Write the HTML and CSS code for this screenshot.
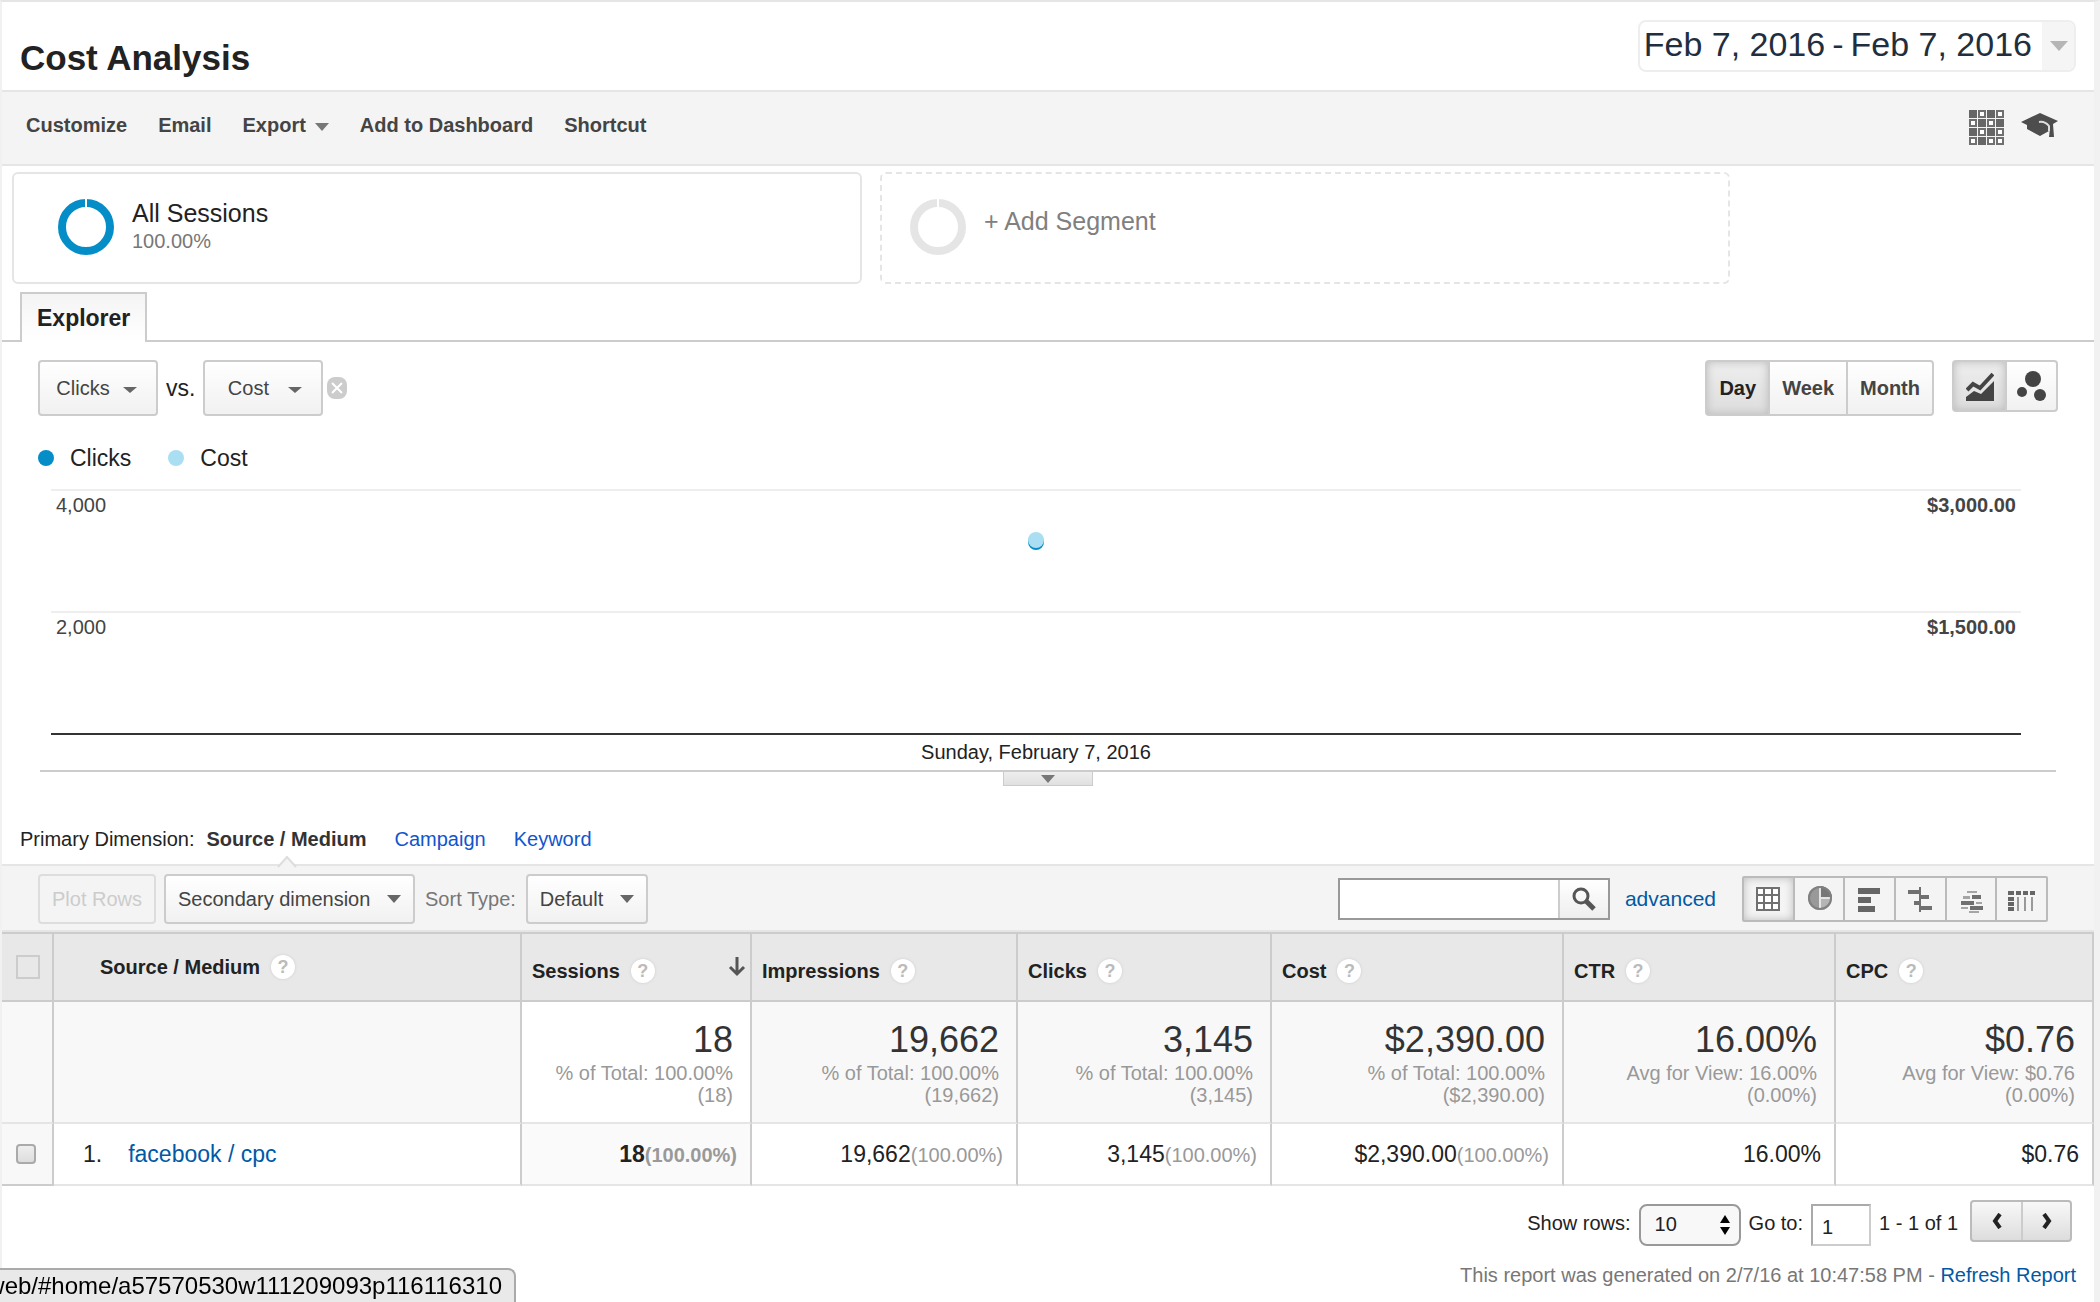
FILE: index.html
```html
<!DOCTYPE html>
<html lang="en">
<head>
    <meta charset="utf-8">
    <meta name="viewport" content="width=device-width">
    <title>Cost Analysis</title>
    <link rel="stylesheet" href="styles.css">
</head>
<body>
<div class="page">
    <header class="header">
        <h1>Cost Analysis</h1>
        <button class="date-range" type="button">
            <span class="dates">Feb 7, 2016<span class="dash">-</span>Feb 7, 2016</span>
            <span class="date-arrow"><span class="caret"></span></span>
        </button>
    </header>

    <div class="toolbar">
        <nav class="actions">
            <button type="button">Customize</button>
            <button type="button">Email</button>
            <button type="button">Export<span class="caret"></span></button>
            <button type="button">Add to Dashboard</button>
            <button type="button">Shortcut</button>
        </nav>
        <button class="tool-icon" type="button" aria-label="Intelligence events">
            <svg width="36" height="36" viewBox="0 0 36 36">
                <g fill="#666">
                    <path d="M0,0h8v8h-8z M18,0h8v8h-8z M9,9h8v8h-8z M27,9h8v8h-8z M0,18h8v8h-8z M18,18h8v8h-8z M9,27h8v8h-8z"/>
                </g>
                <g fill="#fff" stroke="#707070" stroke-width="2">
                    <path d="M10,1h6v6h-6z M28,1h6v6h-6z M1,10h6v6h-6z M19,10h6v6h-6z M10,19h6v6h-6z M28,19h6v6h-6z M1,28h6v6h-6z M19,28h6v6h-6z M28,28h6v6h-6z"/>
                </g>
            </svg>
        </button>
        <button class="tool-icon" type="button" aria-label="Education">
            <svg width="38" height="36" viewBox="0 0 38 36">
                <path fill="#4d4d4d" d="M0,12 L19,3 L37,11 L32,14 L33,27 L28,27 L29,18 L28,21 L19,26 L6,19 L6,15 Z"/>
                <path fill="none" stroke="#ddd" stroke-width="2" d="M18,12 Q24,11 28,16 L28,21"/>
            </svg>
        </button>
    </div>

    <section class="segments">
        <div class="segment">
            <svg class="ring" width="56" height="56" viewBox="0 0 56 56">
                <circle cx="28" cy="28" r="24" fill="none" stroke="#058dc7" stroke-width="8"/>
                <path d="M28,0v9" stroke="#fff" stroke-width="2"/>
            </svg>
            <div>
                <div class="segment-name">All Sessions</div>
                <div class="segment-share">100.00%</div>
            </div>
        </div>
        <button class="segment segment-add" type="button">
            <svg class="ring" width="56" height="56" viewBox="0 0 56 56">
                <circle cx="28" cy="28" r="24" fill="none" stroke="#e5e5e5" stroke-width="8"/>
                <path d="M28,0v9" stroke="#fff" stroke-width="2"/>
            </svg>
            <span class="add-label">+ Add Segment</span>
        </button>
    </section>

    <nav class="tabs">
        <a class="tab" href="#explorer">Explorer</a>
    </nav>

    <section class="explorer">
        <div class="controls">
            <div class="metrics">
                <span class="picker metric">
                    <select aria-label="First metric"><option>Clicks</option></select>
                </span>
                <span>vs.</span>
                <span class="second-metric">
                    <span class="picker metric">
                        <select aria-label="Second metric"><option>Cost</option></select>
                    </span>
                    <button class="remove" type="button" aria-label="Remove metric">
                        <svg width="20" height="22" viewBox="0 0 20 22">
                            <rect width="20" height="22" rx="8" fill="#ccc"/>
                            <path d="M5,6 L15,16 M15,6 L5,16" stroke="#fff" stroke-width="2"/>
                        </svg>
                    </button>
                </span>
            </div>
            <div class="group periods">
                <button class="active" type="button">Day</button>
                <button type="button">Week</button>
                <button type="button">Month</button>
            </div>
            <div class="group charts">
                <button class="active" type="button" aria-label="Line chart">
                    <svg width="28" height="30" viewBox="0 0 28 30">
                        <path fill="#444" d="M0,30 V26 L8,20 L15,23 L28,10 V30 Z"/>
                        <path fill="none" stroke="#444" stroke-width="4" d="M1,19 L7,13 L14,17 L27,3"/>
                    </svg>
                </button>
                <button type="button" aria-label="Motion chart">
                    <svg width="30" height="30" viewBox="0 0 30 30">
                        <g fill="#444">
                            <circle cx="16" cy="8" r="8"/>
                            <circle cx="5" cy="21" r="5"/>
                            <circle cx="23" cy="24" r="6"/>
                        </g>
                    </svg>
                </button>
            </div>
        </div>

        <ul class="legend">
            <li class="clicks">Clicks</li>
            <li class="cost">Cost</li>
        </ul>

        <div class="chart">
            <div class="gridline"><span>4,000</span><b>$3,000.00</b></div>
            <div class="gridline"><span>2,000</span><b>$1,500.00</b></div>
            <div class="axis">Sunday, February 7, 2016</div>
            <span class="point"></span>
        </div>
        <div class="timeline">
            <button class="handle" type="button" aria-label="Expand timeline"><span class="caret"></span></button>
        </div>
    </section>

    <div class="dimensions">
        <span>Primary Dimension:</span>
        <nav>
            <b class="current">Source / Medium<svg class="notch" width="20" height="12" viewBox="0 0 20 12"><path d="M1,11 L10,1 L19,11" fill="#f4f4f4" stroke="#ddd" stroke-width="2"/></svg></b>
            <a href="#campaign">Campaign</a>
            <a href="#keyword">Keyword</a>
        </nav>
    </div>

    <div class="table-tools">
        <button class="plot" type="button" disabled>Plot Rows</button>
        <span class="picker secondary">
            <select aria-label="Secondary dimension"><option>Secondary dimension</option></select>
        </span>
        <label for="sort">Sort Type:</label>
        <span class="picker">
            <select id="sort"><option>Default</option></select>
        </span>
        <form class="search">
            <input type="text" aria-label="Search">
            <button type="button" aria-label="Search rows">
                <svg width="24" height="24" viewBox="0 0 24 24" fill="none" stroke="#555">
                    <circle cx="9" cy="9" r="7" stroke-width="3"/>
                    <path d="M14,14 L22,22" stroke-width="5"/>
                </svg>
            </button>
        </form>
        <a class="advanced" href="#advanced">advanced</a>
        <div class="group views">
            <button class="active" type="button" aria-label="Table">
                <svg width="28" height="28" viewBox="0 0 28 28">
                    <path fill="#fff" stroke="#707070" stroke-width="2" d="M3,3h22v22h-22z M10,3v22 M18,3v22 M3,10h22 M3,18h22"/>
                </svg>
            </button>
            <button type="button" aria-label="Percentage">
                <svg width="28" height="28" viewBox="0 0 28 28">
                    <circle cx="15" cy="13" r="12" fill="#999"/>
                    <path fill="#b5b5b5" d="M15,13h12a12,12 0 0 1 -12,12z"/>
                    <path fill="#777" d="M15,13v-12a12,12 0 0 1 12,12z"/>
                    <path d="M15,1v24 M15,13h12" stroke="#e5e5e5" stroke-width="2"/>
                    <circle cx="15" cy="13" r="11" fill="none" stroke="#808080" stroke-width="2"/>
                </svg>
            </button>
            <button type="button" aria-label="Performance">
                <svg width="28" height="28" viewBox="0 0 28 28">
                    <path fill="#666" d="M2,3h22v6h-22z M2,12h13v6h-13z M2,21h17v6h-17z"/>
                </svg>
            </button>
            <button type="button" aria-label="Comparison">
                <svg width="28" height="28" viewBox="0 0 28 28">
                    <path fill="#707070" d="M13,2h2v25h-2z M2,5h12v4h-12z M14,10h9v4h-9z M8,16h6v4h-6z M14,21h12v4h-12z"/>
                </svg>
            </button>
            <button type="button" aria-label="Term cloud">
                <svg width="28" height="28" viewBox="0 0 28 28">
                    <path fill="#707070" d="M15,10h9v4h-9z M4,16h13v4h-13z M13,21h13v4h-13z"/>
                    <path fill="#a5a5a5" d="M10,6h10v2h-10z M6,11h7v3h-7z M19,17h6v2h-6z M4,22h7v2h-7z M12,26h10v2h-10z"/>
                </svg>
            </button>
            <button type="button" aria-label="Pivot">
                <svg width="28" height="28" viewBox="0 0 28 28">
                    <path fill="#666" d="M0,6h6v4h-6z M8,6h5v4h-5z M15,6h5v4h-5z M22,6h5v4h-5z M0,12h6v4h-6z M0,17h6v4h-6z M0,22h6v4h-6z"/>
                    <path fill="#999" d="M9,12h2v14h-2z M16,12h2v14h-2z M23,12h2v14h-2z"/>
                </svg>
            </button>
        </div>
    </div>

    <table class="report">
        <colgroup>
            <col class="col-check"><col class="col-source"><col class="col-sessions"><col class="col-impressions">
            <col class="col-clicks"><col class="col-cost"><col class="col-ctr"><col class="col-cpc">
        </colgroup>
        <thead>
            <tr>
                <th class="check"><input class="check-all" type="checkbox" aria-label="Select all"></th>
                <th class="source"><div>Source / Medium<span class="help">?</span></div></th>
                <th><div>Sessions<span class="help">?</span>
                    <svg class="sort" width="18" height="20" viewBox="0 0 18 20"><path fill="none" stroke="#555" stroke-width="3" d="M9,0v17 M2,10 L9,17 L16,10"/></svg></div></th>
                <th><div>Impressions<span class="help">?</span></div></th>
                <th><div>Clicks<span class="help">?</span></div></th>
                <th><div>Cost<span class="help">?</span></div></th>
                <th><div>CTR<span class="help">?</span></div></th>
                <th><div>CPC<span class="help">?</span></div></th>
            </tr>
        </thead>
        <tbody>
            <tr class="totals">
                <td class="check"></td>
                <td></td>
                <td class="sorted"><strong>18</strong><small>% of Total: 100.00%<br>(18)</small></td>
                <td><strong>19,662</strong><small>% of Total: 100.00%<br>(19,662)</small></td>
                <td><strong>3,145</strong><small>% of Total: 100.00%<br>(3,145)</small></td>
                <td><strong>$2,390.00</strong><small>% of Total: 100.00%<br>($2,390.00)</small></td>
                <td><strong>16.00%</strong><small>Avg for View: 16.00%<br>(0.00%)</small></td>
                <td><strong>$0.76</strong><small>Avg for View: $0.76<br>(0.00%)</small></td>
            </tr>
            <tr class="row">
                <td class="check"><input type="checkbox" aria-label="Select row 1"></td>
                <td class="name"><span class="index">1.</span><a href="#facebook">facebook / cpc</a></td>
                <td class="sorted">18<small>(100.00%)</small></td>
                <td>19,662<small>(100.00%)</small></td>
                <td>3,145<small>(100.00%)</small></td>
                <td>$2,390.00<small>(100.00%)</small></td>
                <td>16.00%</td>
                <td>$0.76</td>
            </tr>
        </tbody>
    </table>

    <footer>
        <div class="pager">
            <label for="rows">Show rows:</label>
            <span class="rows">
                <select id="rows"><option>10</option></select>
                <svg width="10" height="20" viewBox="0 0 10 20"><path d="M0,8 L5,0 L10,8z M0,12 L5,20 L10,12z"/></svg>
            </span>
            <label for="goto">Go to:</label>
            <input id="goto" type="text" value="1">
            <span>1 - 1 of 1</span>
            <div class="group steps">
                <button type="button" aria-label="Previous page">
                    <svg width="10" height="16" viewBox="0 0 10 16"><path fill="none" stroke="#222" stroke-width="4" d="M8,1 L3,8 L8,15"/></svg>
                </button>
                <button type="button" aria-label="Next page">
                    <svg width="10" height="16" viewBox="0 0 10 16"><path fill="none" stroke="#222" stroke-width="4" d="M2,1 L7,8 L2,15"/></svg>
                </button>
            </div>
        </div>
        <p class="generated">This report was generated on 2/7/16 at 10:47:58 PM - <a href="#refresh">Refresh Report</a></p>
    </footer>
</div>
<div class="status">web/#home/a57570530w111209093p116116310</div>
</body>
</html>
```

FILE: styles.css
```css
* {
    box-sizing: border-box;
}

body {
    margin: 0;
    background: #fff;
    color: #222;
    font: 20px/28px "Liberation Sans", Arial, sans-serif;
}

button, input, select {
    margin: 0;
    padding: 0;
    border: 0;
    border-radius: 0;
    background: none;
    color: inherit;
    font: inherit;
}

select, input[type="checkbox"] {
    appearance: none;
}

svg {
    display: block;
}

a {
    color: #0059a5;
    text-decoration: none;
}

.page {
    min-height: 100vh;
    border-top: 2px solid #e5e5e5;
    border-left: 2px solid #f1f1f1;
    border-right: 6px solid #f1f1f1;
}

.caret {
    border: 7px solid transparent;
    border-top: 8px solid #777;
    border-bottom: 0;
}

/* header */

.header {
    display: flex;
    justify-content: space-between;
    align-items: flex-start;
    padding: 18px 18px 12px;
    border-bottom: 2px solid #e5e5e5;
}

h1 {
    margin: 18px 0 0;
    font-size: 35px;
    line-height: 40px;
}

.date-range {
    display: flex;
    align-items: flex-start;
    height: 52px;
    border: 2px solid #eee;
    border-radius: 8px;
    color: #1f2f40;
    font-size: 34px;
    line-height: 45px;
}

.dates {
    padding: 0 10px 0 4px;
}

.dash {
    margin: 0 7px;
}

.date-arrow {
    align-self: stretch;
    display: flex;
    align-items: center;
    padding: 0 6px 0 8px;
    border-radius: 0 6px 6px 0;
    background: #f5f5f5;
}

.date-arrow .caret {
    border-width: 10px 9px 0;
    border-top-color: #b5b5b5;
}

.toolbar {
    display: flex;
    align-items: flex-start;
    gap: 16px;
    padding: 18px 35px 18px 24px;
    border-bottom: 2px solid #e5e5e5;
    background: #f4f4f4;
}

.actions {
    display: flex;
    flex: 1;
    gap: 31px;
}

.actions button {
    display: flex;
    align-items: center;
    gap: 9px;
    color: #444;
    font-weight: bold;
    line-height: 30px;
}

.actions .caret {
    margin-top: 4px;
}

/* segments */

.segments {
    display: flex;
    gap: 18px;
    padding: 6px 10px 0;
}

.segment {
    display: flex;
    flex: 0 1 850px;
    align-items: flex-start;
    gap: 18px;
    padding: 25px 44px 27px;
    border: 2px solid #e5e5e5;
    border-radius: 6px;
}

.segment-add {
    padding-left: 28px;
    border-style: dashed;
    color: #808080;
}

.segment-name, .add-label {
    font-size: 25px;
}

.segment-share {
    color: #777;
}

.add-label {
    line-height: 44px;
}

/* explorer */

.tabs {
    display: flex;
    margin-top: 8px;
    padding-left: 18px;
    border-bottom: 2px solid #ccc;
}

.tab {
    margin-bottom: -2px;
    padding: 0 15px;
    border: 2px solid #ccc;
    border-bottom: 0;
    background: linear-gradient(#f4f4f4, #fff);
    color: #222;
    font-size: 23px;
    font-weight: bold;
    line-height: 48px;
}

.controls {
    display: flex;
    align-items: flex-start;
    gap: 18px;
    padding: 18px 36px 0;
}

.metrics {
    display: flex;
    flex: 1;
    align-items: center;
    gap: 8px;
    font-size: 23px;
}

.second-metric {
    display: flex;
    align-items: center;
    gap: 4px;
}

.picker {
    display: inline-grid;
    align-items: center;
    color: #444;
    font-size: 20px;
}

.picker::after {
    content: "";
    grid-area: 1 / 1;
    justify-self: end;
    margin-right: 14px;
    border: 7px solid transparent;
    border-top: 8px solid #666;
    border-bottom: 0;
    pointer-events: none;
}

.picker select {
    grid-area: 1 / 1;
    height: 50px;
    padding: 0 42px 0 12px;
    border: 2px solid #ccc;
    border-radius: 4px;
    background: linear-gradient(#fff, #f1f1f1);
}

.picker.metric select {
    width: 120px;
    height: 56px;
    padding: 0 30px 0 0;
    text-align: center;
}

.picker.metric::after {
    margin-top: 3px;
    margin-right: 21px;
    border-width: 6px 7px 0;
}

.group {
    display: flex;
    border: 2px solid #ccc;
    border-radius: 4px;
    background: linear-gradient(#fff, #f1f1f1);
}

.group button {
    display: flex;
    align-items: center;
    justify-content: center;
}

.group button + button {
    border-left: 2px solid #ccc;
}

.group .active {
    background: linear-gradient(#eee, #ddd);
    box-shadow: inset 0 0 8px #bbb;
}

.periods button {
    height: 52px;
    padding: 0 12px;
    color: #444;
    font-weight: bold;
}

.periods .active {
    color: #222;
}

.charts button {
    width: 51px;
    height: 48px;
}

.legend {
    display: flex;
    gap: 37px;
    margin: 28px 36px 0;
    padding: 0;
    list-style: none;
    font-size: 23px;
}

.legend li {
    display: flex;
    align-items: center;
    gap: 16px;
}

.legend li::before {
    content: "";
    width: 16px;
    height: 16px;
    border-radius: 8px;
    background: #058dc7;
}

.legend .cost::before {
    background: #aadff3;
}

.chart {
    position: relative;
    margin: 17px 73px 0 49px;
}

.gridline {
    display: flex;
    justify-content: space-between;
    height: 122px;
    padding: 0 5px;
    border-top: 2px solid #eee;
    color: #444;
}

.axis {
    border-top: 2px solid #333;
    line-height: 35px;
    text-align: center;
}

.point {
    position: absolute;
    top: 43px;
    left: 50%;
    width: 16px;
    height: 16px;
    margin-left: -8px;
    border-radius: 8px;
    background: #aadff3;
    box-shadow: 0 2px #058dc7;
}

.timeline {
    display: flex;
    justify-content: center;
    margin: 0 38px;
    border-top: 2px solid #ccc;
}

.handle {
    display: flex;
    justify-content: center;
    width: 90px;
    height: 14px;
    padding-top: 3px;
    border: 1px solid #ccc;
    border-top: 0;
    background: linear-gradient(#eee, #e0e0e0);
}

/* data table */

.dimensions {
    display: flex;
    gap: 12px;
    padding: 38px 18px 10px;
    border-bottom: 2px solid #e5e5e5;
    line-height: 30px;
}

.dimensions nav {
    display: flex;
    gap: 28px;
}

.dimensions a {
    color: #15c;
}

.current {
    position: relative;
    color: #333;
}

.notch {
    position: absolute;
    bottom: -14px;
    left: 50%;
    margin-left: -10px;
}

.table-tools {
    display: flex;
    align-items: center;
    gap: 8px;
    padding: 8px 46px 6px 36px;
    border-bottom: 2px solid #e5e5e5;
    background: #f4f4f4;
    color: #777;
}

.table-tools label {
    margin: 0 2px;
}

.plot {
    height: 50px;
    padding: 0 12px;
    border: 2px solid #ddd;
    border-radius: 4px;
    color: #ccc;
}

.search {
    display: flex;
    height: 42px;
    margin-left: auto;
    border: 2px solid #999;
    background: #fff;
}

.search input {
    width: 218px;
}

.search button {
    padding: 0 12px;
    border-left: 2px solid #ccc;
    background: linear-gradient(#fff, #eee);
}

.advanced {
    margin: 0 18px 0 7px;
    font-size: 21px;
}

.views {
    width: 306px;
    border-color: #bbb;
    border-radius: 2px;
    background: #f4f4f4;
}

.views button {
    flex: 1;
    height: 42px;
}

.group.views button + button {
    border-color: #bbb;
}

.views .active {
    background: #f4f4f4;
}

.report {
    width: 100%;
    border-spacing: 0;
    border-top: 2px solid #ccc;
    table-layout: fixed;
}

.col-check { width: 52px; }
.col-source { width: 468px; }
.col-sessions { width: 230px; }
.col-impressions { width: 266px; }
.col-clicks { width: 254px; }
.col-cost { width: 292px; }
.col-ctr { width: 272px; }
.col-cpc { width: 258px; }

.report th {
    height: 68px;
    padding: 8px 4px 0 10px;
    border-right: 2px solid #ccc;
    border-bottom: 2px solid #ccc;
    background: #e8e8e8;
    text-align: left;
}

.report th div {
    display: flex;
    align-items: center;
    gap: 11px;
}

.report .source {
    padding: 0 0 0 46px;
}

.help {
    width: 24px;
    height: 24px;
    border-radius: 12px;
    background: #fff;
    box-shadow: 0 0 3px #ccc;
    color: #bbb;
    font-size: 18px;
    line-height: 24px;
    text-align: center;
}

.sort {
    margin-left: auto;
    margin-bottom: 8px;
}

.report td {
    padding: 0 13px;
    border-right: 2px solid #ccc;
    border-bottom: 2px solid #e5e5e5;
    text-align: right;
}

.report small {
    color: #999;
    font-size: 20px;
}

.report .totals td {
    padding: 18px 17px 16px;
    background: #f8f8f8;
}

.totals strong {
    display: block;
    color: #333;
    font-size: 36px;
    font-weight: normal;
    line-height: 40px;
}

.totals small {
    display: block;
    margin-top: 2px;
    line-height: 22px;
}

.report .totals .sorted {
    background: #fff;
}

.row td {
    height: 62px;
    font-size: 23px;
}

.row .sorted {
    background: #fafafa;
    font-weight: bold;
}

.report .name {
    padding-left: 29px;
    text-align: left;
}

.index {
    margin-right: 26px;
}

.report .check {
    padding: 0 0 0 14px;
    text-align: left;
}

.row .check {
    border-bottom-color: #ccc;
    background: #f8f8f8;
}

.check input {
    display: block;
    width: 20px;
    height: 20px;
    border: 2px solid #aaa;
    border-radius: 4px;
    background: linear-gradient(#eee, #ddd);
}

.check .check-all {
    width: 24px;
    height: 24px;
    border-color: #ccc;
    border-radius: 0;
    background: none;
}

/* footer */

.pager {
    display: flex;
    align-items: center;
    justify-content: flex-end;
    gap: 8px;
    height: 46px;
    margin: 14px 22px 0;
}

.rows {
    display: grid;
    align-self: flex-end;
    align-items: center;
}

.rows select {
    grid-area: 1 / 1;
    width: 102px;
    height: 42px;
    padding: 0 0 3px 14px;
    border: 2px solid #999;
    border-radius: 8px;
    background: #f8f8f8;
}

.rows svg {
    grid-area: 1 / 1;
    justify-self: end;
    margin-right: 11px;
    pointer-events: none;
}

#goto {
    align-self: flex-end;
    width: 60px;
    height: 42px;
    padding: 4px 9px 0;
    border: 2px solid #aaa;
    border-right-color: #ccc;
    border-bottom-color: #ccc;
}

.steps {
    align-self: flex-start;
    margin-left: 4px;
    border-color: #bbb;
    background: linear-gradient(#f8f8f8, #ddd);
}

.steps button {
    width: 49px;
    height: 38px;
}

.generated {
    margin: 15px 18px 0;
    color: #777;
    text-align: right;
}

.status {
    position: fixed;
    bottom: 0;
    left: 0;
    display: flex;
    justify-content: flex-end;
    width: 516px;
    height: 34px;
    padding-right: 12px;
    overflow: hidden;
    border: 2px solid #aaa;
    border-left: 0;
    border-bottom: 0;
    border-radius: 0 8px 0 0;
    background: #e9e9e9;
    color: #000;
    font-size: 24px;
    line-height: 32px;
}
```
